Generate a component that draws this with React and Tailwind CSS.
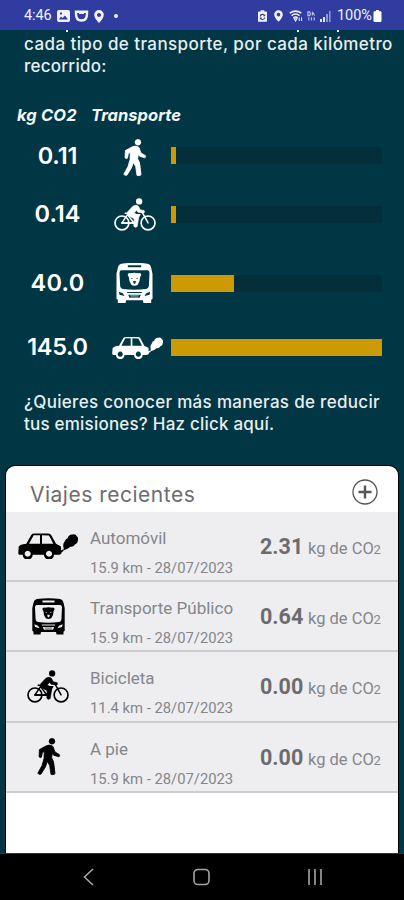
const factors = [
  { value: '0.11', icon: 'walk', percent: 2.4, height: 'h-[59px]', tracking: 'tracking-[-0.1px]' },
  { value: '0.14', icon: 'bike', percent: 2.4, height: 'h-[58px]', tracking: 'tracking-normal' },
  { value: '40.0', icon: 'bus', percent: 30, height: 'h-[80px]', tracking: 'tracking-[0.3px]' },
  { value: '145.0', icon: 'car', percent: 100, height: 'h-[48px]', tracking: 'tracking-[-0.3px]' },
];

const trips = [
  { name: 'Automóvil', icon: 'car', km: '15.9', date: '28/07/2023', co2: '2.31' },
  { name: 'Transporte Público', icon: 'bus', km: '15.9', date: '28/07/2023', co2: '0.64' },
  { name: 'Bicicleta', icon: 'bike', km: '11.4', date: '28/07/2023', co2: '0.00' },
  { name: 'A pie', icon: 'walk', km: '15.9', date: '28/07/2023', co2: '0.00' },
];

function WalkIcon({ className }) {
  return (
    <svg viewBox="0 0 69 112" className={className} fill="currentColor" stroke="currentColor" strokeWidth="2.5" overflow="visible">
      <circle cx="45" cy="10" r="8.5" />
      <path d="M27 24 Q37 19 46 24 Q50 27 51 34 L54 42 L67 50 Q70 54 66 57 L50 52 L46 46 L44 60 Q50 69 51 80 L54 107 Q54 111 48 111 L42 110 L38 83 L31 71 L25 88 L12 109 Q8 112 2 107 L15 83 L21 62 L22 41 L16 44 L13 58 Q9 61 6 57 L7 35 Z" />
    </svg>
  );
}

function BikeIcon({ className }) {
  return (
    <svg viewBox="0 0 127 99" className={className} fill="none" stroke="currentColor" strokeLinejoin="round" strokeLinecap="round">
      <circle cx="24" cy="75" r="21" strokeWidth="5" />
      <circle cx="103" cy="75" r="21" strokeWidth="5" />
      <circle cx="76" cy="10" r="9.5" fill="currentColor" stroke="none" />
      <path d="M24 75 L41 50 L78 50 L60 75 Z M41 50 L60 75 M38 46 L34 46 M103 75 L85 42 L91 42" strokeWidth="4.5" />
      <path d="M58 24 Q68 18 74 25 L79 35 L91 38 Q93 43 88 44 L73 43 L68 37 L61 45 L72 51 Q77 56 74 62 L70 86 Q64 91 60 85 L61 62 L42 52 Q36 48 41 42 Z" fill="currentColor" strokeWidth="2" />
      <path d="M60 75 L46 76 L24 75" strokeWidth="5" />
    </svg>
  );
}

function BusIcon({ className }) {
  return (
    <svg viewBox="0 0 110 120" className={className} fill="currentColor">
      <path
        fillRule="evenodd"
        d="M16 2 Q55 -3 94 2 Q103 4 105 14 L109 32 L109 108 L105 110 L105 120 L82 120 L80 112 L30 112 L28 120 L5 120 L5 110 L1 108 L1 32 L5 14 Q7 4 16 2 Z M35 7 L35 13 L75 13 L75 7 Z M15 22 Q10 23 10 30 L12 70 Q13 77 20 78 Q55 83 90 78 Q97 77 98 70 L100 30 Q100 23 95 22 Z M8 86 L10 95 L25 99 L20 91 Z M102 86 L90 91 L85 99 L100 95 Z M33 87 L77 87 L77 90 L33 90 Z M36 95 L74 95 L70 104 L40 104 Z"
      />
      <path
        fillRule="evenodd"
        d="M35 33 Q39 29 43 31 Q55 28 67 31 Q71 29 75 33 Q76 38 72 42 L70 55 L64 66 Q55 71 46 66 L40 55 L38 42 Q34 38 35 33 Z M44 44 L47 48 L51 47 Z M66 44 L59 47 L63 48 Z M51 54 L52 61 L55 63 L58 61 L59 54 Z"
      />
      <path d="M42 98 H68 M44 102 H66" stroke="currentColor" strokeWidth="1.5" />
    </svg>
  );
}

function CarIcon({ className }) {
  return (
    <svg viewBox="0 0 180 77" className={className} fill="currentColor">
      <path
        fillRule="evenodd"
        d="M40 5 Q43 1 50 1 L91 1 Q97 1 100 6 L114 32 L128 39 Q130 42 129 51 L131 58 Q130 65 120 65 L108 65 A15 15 0 0 1 78 65 L44 65 A15 15 0 0 1 14 65 L5 65 Q0 65 1 57 L2 41 Q5 34 25 32 Z M47 6 L33 32 L66 32 L66 6 Z M72 6 L72 32 L106 32 L93 7 Z M29 53 A9 9 0 1 0 29.1 53 Z M93 53 A9 9 0 1 0 93.1 53 Z"
      />
      <path d="M127 53 L136 48 L136 54 L130 57 Z" />
      <path d="M137 45 Q133 33 140 25 Q143 16 149 15 Q152 3 164 4 Q173 2 177 10 Q183 16 179 24 Q179 32 171 34 Q167 42 157 41 L149 47 L141 50 L136 53 Z" />
    </svg>
  );
}

const icons = { walk: WalkIcon, bike: BikeIcon, bus: BusIcon, car: CarIcon };

const factorIconSize = {
  walk: 'w-[23px] h-[37px] mt-[4px]',
  bike: 'w-[42px] h-[33px] mt-px',
  bus: 'w-[37px] h-[40px]',
  car: 'w-[51px] h-[23px] ml-[5px]',
};

const tripIconSize = {
  walk: 'w-[23px] h-[37px]',
  bike: 'w-[42px] h-[33px]',
  bus: 'w-[33px] h-[37px]',
  car: 'w-[60px] h-[26px]',
};

function PinIcon({ className }) {
  return (
    <svg viewBox="0 0 10 13" className={className} fill="#f2f2fb">
      <path fillRule="evenodd" d="M5 0 A4.8 4.8 0 0 1 9.8 4.8 Q9.8 8 5 13 Q0.2 8 0.2 4.8 A4.8 4.8 0 0 1 5 0 Z M5 3 A2 2 0 1 0 5.01 3 Z" />
    </svg>
  );
}

function StatusBar() {
  return (
    <header className="h-[30px] shrink-0 bg-[#303c9f] flex items-center pt-[2px] pl-[24px] pr-[22px] text-[#f2f2fb] font-['Roboto',sans-serif]">
      <span className="text-[14.5px] leading-none tracking-[-0.1px] w-[33px]">4:46</span>
      <svg viewBox="0 0 13 12" className="w-[13px] h-[12px]" fill="#f2f2fb">
        <path fillRule="evenodd" d="M2 0 H11 Q13 0 13 2 V10 Q13 12 11 12 H2 Q0 12 0 10 V2 Q0 0 2 0 Z M2 9.5 H11 L8 5.5 L5.5 8 L4 6.5 Z M3 2.5 V4.5 H5 V2.5 Z" />
      </svg>
      <svg viewBox="0 0 15 12" className="w-[15px] h-[12px] ml-[4px]" fill="none" stroke="#f2f2fb" strokeWidth="2.4">
        <path d="M2 1.8 H13 V4 Q13 10.5 7.5 10.5 Q2 10.5 2 4 Z" />
        <path d="M5 3.2 H10" strokeWidth="1.5" />
      </svg>
      <PinIcon className="w-[10px] h-[13px] ml-[5px]" />
      <span className="size-[4px] rounded-full bg-[#f2f2fb] ml-[10px]"></span>

      <div className="ml-auto flex items-center">
        <svg viewBox="0 0 10 13" className="w-[9px] h-[12px]" fill="#f2f2fb">
          <path fillRule="evenodd" d="M3 0 H7 V1.5 H9 Q10 1.5 10 2.5 V12 Q10 13 9 13 H1 Q0 13 0 12 V2.5 Q0 1.5 1 1.5 H3 Z M5 4 A3 3 0 0 0 2 7 H3.3 A1.8 1.8 0 0 1 6.5 6 L5.8 6.8 H8 V4.6 L7.3 5.2 A3 3 0 0 0 5 4 Z M2 8.2 V10.6 L2.8 9.9 A3 3 0 0 0 8 8.2 H6.8 A1.8 1.8 0 0 1 3.6 9.1 L4.3 8.2 Z" />
        </svg>
        <PinIcon className="w-[9px] h-[12px] ml-[7px]" />
        <svg viewBox="0 0 15 13" className="w-[14px] h-[12px] ml-[6px]" fill="none" stroke="#f2f2fb" strokeWidth="1.7">
          <path d="M0.7 3.5 Q7 -1 13.3 3.5 M2.7 6 Q7 2.8 11.3 6 M4.7 8.4 Q7 6.8 9.3 8.4" />
          <path d="M5.5 9.5 L7 12 L8.5 9.5 Z M11 8 V12 M13.5 8 V12" strokeWidth="1.1" />
        </svg>
        <svg viewBox="0 0 10 11" className="w-[9px] h-[10px] ml-[4px]" fill="none" stroke="#b9bde8" strokeWidth="1.3">
          <path d="M1 1 V5 H3 Q4.5 3 3 1 Z M6 0.8 L8.5 5 M6 5 V1 M2 7 V10.5 M5 7 V10.5 M8 7 V10.5" />
        </svg>
        <svg viewBox="0 0 11 11" className="w-[11px] h-[11px] ml-[4px]" fill="#8e95d8">
          <path d="M0 8 H2 V11 H0 Z M3 6 H5 V11 H3 Z" fill="#e6e7f8" />
          <path d="M6 3 H8 V11 H6 Z M9 0 H10.6 V11 H9 Z" />
        </svg>
        <span className="text-[14.5px] leading-none ml-[6px]">100%</span>
        <svg viewBox="0 0 8 12" className="w-[9px] h-[12px] ml-[1px]" fill="#ffffff">
          <path d="M2.5 0 H5.5 V1.3 H7 Q8 1.3 8 2.3 V11 Q8 12 7 12 H1 Q0 12 0 11 V2.3 Q0 1.3 1 1.3 H2.5 Z" />
        </svg>
      </div>
    </header>
  );
}

function FactorRow({ factor }) {
  const Icon = icons[factor.icon];
  return (
    <div className={`flex items-center ${factor.height}`}>
      <div className={`w-[80px] ml-[17.5px] mr-[0.5px] text-center text-[23.5px] leading-none font-semibold text-white ${factor.tracking}`}>
        {factor.value}
      </div>
      <div className="w-[73px] flex items-center justify-center text-white">
        <Icon className={factorIconSize[factor.icon]} />
      </div>
      <div className="w-[211px] h-[17px] bg-[#042e39]">
        <div className="h-full bg-[#cc9a04]" style={{ width: `${factor.percent}%` }}></div>
      </div>
    </div>
  );
}

function TripRow({ trip }) {
  const Icon = icons[trip.icon];
  return (
    <li className="h-[70.2px] flex bg-[#eeeef0] border-b-2 border-[#cdcdd0] font-['Roboto',sans-serif] whitespace-nowrap">
      <div className="w-[84px] shrink-0 flex items-center justify-center text-black">
        <Icon className={tripIconSize[trip.icon]} />
      </div>
      <div className="w-[170px] shrink-0 pt-[15px] text-[#85868a]">
        <div className="text-[17px] leading-[22px]">{trip.name}</div>
        <div className="text-[14.8px] leading-[18px] mt-[10px]">
          {trip.km} km - {trip.date}
        </div>
      </div>
      <div className="h-[49px] pt-[22px] leading-[26px] flex items-baseline text-[#85868a]">
        <span className="w-[48px] text-[21.5px] font-bold text-[#6b6c70]">{trip.co2}</span>
        <span className="w-[65.5px] text-[16.5px]">kg de CO</span>
        <span className="text-[13px] leading-none">2</span>
      </div>
    </li>
  );
}

function NavBar() {
  return (
    <nav className="h-[47px] shrink-0 bg-black border-t border-[#333] text-[#a5a5a5]">
      <svg viewBox="0 0 404 46" className="w-full h-[46px]" fill="none" stroke="currentColor" strokeWidth="1.6">
        <path d="M93 15 L84.5 23 L93 31" />
        <rect x="194" y="15.5" width="15" height="15" rx="4" />
        <path d="M309 15 V31 M315 15 V31 M321 15 V31" />
      </svg>
    </nav>
  );
}

function App() {
  return (
    <div className="w-[404px] h-[900px] overflow-hidden flex flex-col bg-[#013645] font-['Inter',sans-serif]">
      <StatusBar />
      <main className="flex-1 min-h-0 flex flex-col">
        {/* Descenders of the line scrolled under the status bar */}
        <div className="h-[2px] flex text-[#e8eef0]">
          <span className="w-[2px] h-[2px] ml-[66px] bg-current"></span>
          <span className="w-[2px] h-[2px] ml-[229px] bg-current"></span>
          <span className="w-[2px] h-[2px] ml-[38px] bg-current"></span>
        </div>
        <p className="pl-[24px] mt-[2px] text-[17px] leading-[21.5px] font-medium text-[#e8eef0] whitespace-nowrap">
          <span className="block tracking-[0.42px]">cada tipo de transporte, por cada kilómetro</span>
          <span className="block tracking-[0.25px]">recorrido:</span>
        </p>

        <div className="flex h-[22px] mt-[27px] pl-[17px] text-[16.5px] leading-[22px] font-bold italic text-[#f2f6f7] whitespace-nowrap">
          <span className="w-[74px] tracking-[0.15px]">kg CO2</span>
          <span className="tracking-[0.05px]">Transporte</span>
        </div>

        <section className="h-[247px]">
          {factors.map((factor) => (
            <FactorRow key={factor.value} factor={factor} />
          ))}
        </section>

        <p className="pl-[24px] mt-[19px] text-[17px] leading-[21.5px] font-medium text-[#e8eef0] whitespace-nowrap">
          <span className="block tracking-[0.31px]">¿Quieres conocer más maneras de reducir</span>
          <span className="block tracking-[0.21px]">tus emisiones? Haz click aquí.</span>
        </p>

        <section className="mt-auto mx-[6px] h-[387px] shrink-0 bg-white rounded-t-[9px] overflow-hidden ring-1 ring-black">
          <div className="h-[46px] flex items-center justify-between pl-[24px] pr-[20px] pt-[6px]">
            <h2 className="text-[21px] leading-none tracking-[0.5px] text-[#6d6d6d] pt-[5px]">Viajes recientes</h2>
            <svg viewBox="0 0 26 26" className="size-[26px]" fill="none" stroke="#555">
              <circle cx="13" cy="13" r="12" strokeWidth="1.3" />
              <path d="M13 6.5 V19.5 M6.5 13 H19.5" strokeWidth="2.4" />
            </svg>
          </div>
          <ul>
            {trips.map((trip) => (
              <TripRow key={trip.name} trip={trip} />
            ))}
          </ul>
        </section>
      </main>
      <NavBar />
    </div>
  );
}

export default App;
